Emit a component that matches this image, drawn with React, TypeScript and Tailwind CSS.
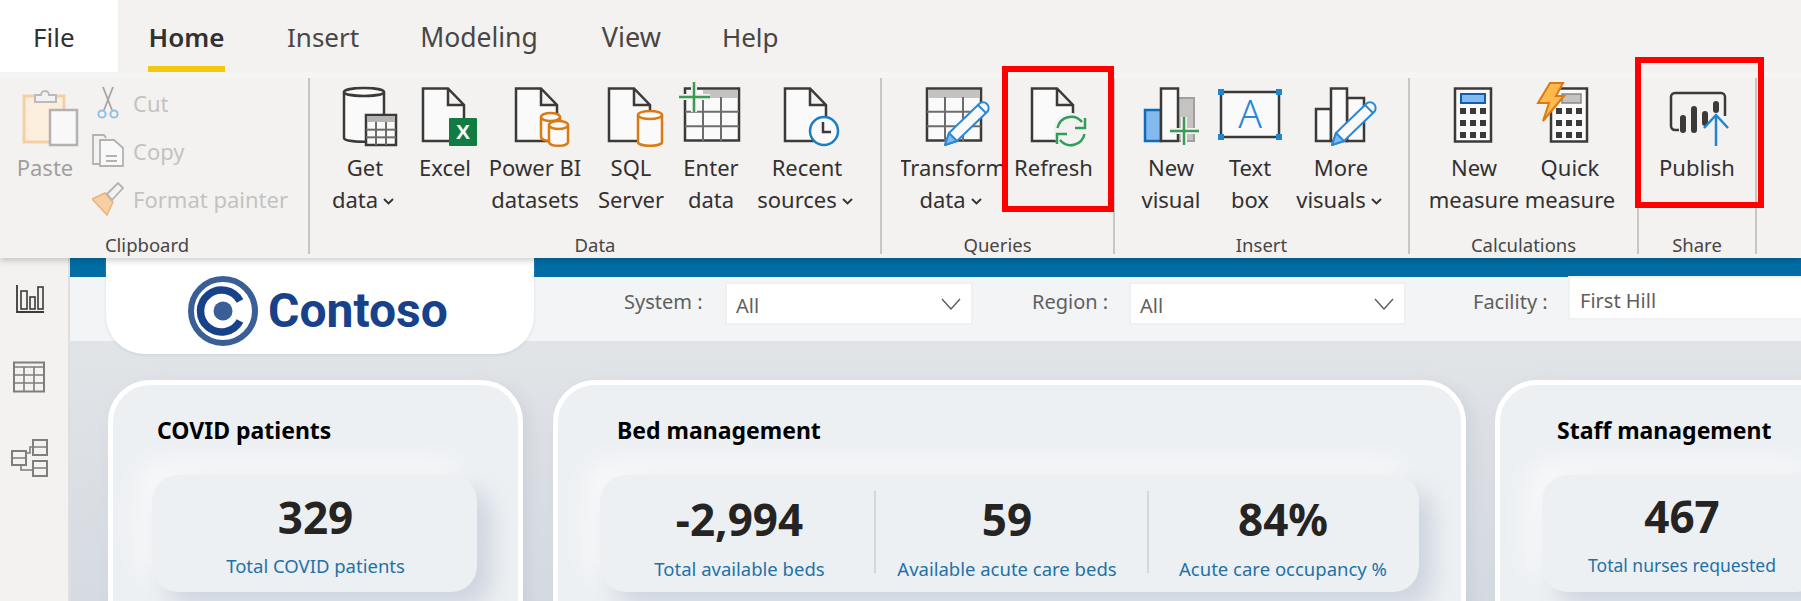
import React from "react";

const INK = "#3b3a39";

function Doc({ x = 8 }: { x?: number }) {
  return (
    <path
      d={`M${x} 2.5H${x + 25}L${x + 41} 19V55H${x}ZM${x + 25} 2.5V19H${x + 41}`}
      fill="#fafafa"
      stroke={INK}
      strokeWidth="2.5"
    />
  );
}

function Cyl({ x, y, w, h, stroke = "#d97a13" }: { x: number; y: number; w: number; h: number; stroke?: string }) {
  return (
    <g fill="#fafafa" stroke={stroke} strokeWidth="2.5">
      <path d={`M${x} ${y + 4}V${y + h - 4}C${x} ${y + h + 1} ${x + w} ${y + h + 1} ${x + w} ${y + h - 4}V${y + 4}`} />
      <ellipse cx={x + w / 2} cy={y + 4} rx={w / 2} ry={4} />
    </g>
  );
}

function Pencil() {
  return (
    <g stroke="#2b88d8" strokeWidth="2" strokeLinejoin="round">
      <path d="M22 59L26 47L56 18a5.6 5.6 0 0 1 8 8L34 55Z" fill="#fafafa" />
      <path d="M22 59L26 47L34 55Z" fill="#83b9ec" />
      <path d="M55 19L63 27" fill="none" />
    </g>
  );
}

function Grid({ x, y, w, h, cols, rows, stroke = "#6e6d6b" }: { x: number; y: number; w: number; h: number; cols: number; rows: number; stroke?: string }) {
  const lines: React.ReactNode[] = [];
  for (let i = 1; i < cols; i++) {
    const lx = x + (w * i) / cols;
    lines.push(<path key={"c" + i} d={`M${lx} ${y}V${y + h}`} />);
  }
  for (let i = 1; i < rows; i++) {
    const ly = y + (h * i) / rows;
    lines.push(<path key={"r" + i} d={`M${x} ${ly}H${x + w}`} />);
  }
  return <g stroke={stroke} strokeWidth="2" fill="none">{lines}</g>;
}

function Svg({ children }: { children: React.ReactNode }) {
  return (
    <svg width="60" height="60" viewBox="0 0 60 60" className="shrink-0 overflow-visible">
      {children}
    </svg>
  );
}

const GetData = () => (
  <Svg>
    <Cyl x={9} y={2} w={40} h={54} stroke={INK} />
    <rect x="31" y="29" width="30" height="30" fill="#fafafa" stroke={INK} strokeWidth="2.5" />
    <rect x="32" y="30" width="28" height="6" fill="#b5b4b2" />
    <Grid x={31} y={36} w={30} h={23} cols={3} rows={3} />
  </Svg>
);
const Excel = () => (
  <Svg>
    <Doc />
    <rect x="34" y="32" width="28" height="28" rx="1" fill="#107c41" />
    <text x="48" y="53" textAnchor="middle" fontSize="21" fontWeight="700" fill="#fff" fontFamily="Liberation Sans, sans-serif">X</text>
  </Svg>
);
const PowerBi = () => (
  <Svg>
    <Doc x={11} />
    <Cyl x={36} y={27} w={19} h={28} />
    <Cyl x={44} y={35} w={19} h={25} />
  </Svg>
);
const Sql = () => (
  <Svg>
    <Doc />
    <Cyl x={37} y={25} w={24} h={35} />
  </Svg>
);
const EnterData = () => (
  <Svg>
    <rect x="4" y="2.5" width="54" height="52" fill="#fafafa" stroke={INK} strokeWidth="2.5" />
    <rect x="22" y="4" width="35" height="8" fill="#c4c3c1" />
    <Grid x={4} y={11} w={54} h={44} cols={3} rows={3} />
    <path d="M13 -4V26M-2 11H29" stroke="#f3f2f1" strokeWidth="6" />
    <path d="M13 -4V26M-2 11H29" stroke="#3c9a55" strokeWidth="2.5" />
  </Svg>
);
const Recent = () => (
  <Svg>
    <Doc />
    <circle cx="47" cy="45" r="14" fill="#fafafa" stroke="#1e7fc0" strokeWidth="2.5" />
    <path d="M46 36V46H54" fill="none" stroke={INK} strokeWidth="2.5" />
  </Svg>
);
const Transform = () => (
  <Svg>
    <rect x="4" y="2.5" width="54" height="52" fill="#fafafa" stroke={INK} strokeWidth="2.5" />
    <rect x="5" y="4" width="52" height="8" fill="#c4c3c1" />
    <Grid x={4} y={11} w={54} h={44} cols={3} rows={3} />
    <Pencil />
  </Svg>
);
const Refresh = () => (
  <Svg>
    <Doc />
    <circle cx="47" cy="45" r="18" fill="#f3f2f1" />
    <g fill="none" stroke="#2f9e57" strokeWidth="2.5">
      <path d="M33.5 42A14 14 0 0 1 58 36" />
      <path d="M61 32V42H51" />
      <path d="M60.5 48A14 14 0 0 1 36 54" />
      <path d="M33 58V48H43" />
    </g>
  </Svg>
);
const NewVisual = () => (
  <Svg>
    <rect x="36" y="12" width="17" height="43" fill="#c4c3c1" stroke="#a19f9d" strokeWidth="2" />
    <rect x="4" y="24" width="16" height="31" fill="#83b9ec" stroke="#0f6cbd" strokeWidth="2.5" />
    <rect x="20" y="2.5" width="17" height="52.5" fill="#fafafa" stroke={INK} strokeWidth="2.5" />
    <path d="M43 31V59M29 45H58" stroke="#f3f2f1" strokeWidth="6" />
    <path d="M43 31V59M29 45H58" stroke="#3c9a55" strokeWidth="2.5" />
  </Svg>
);
const TextBox = () => (
  <Svg>
    <rect x="1" y="6" width="58" height="45" fill="#fafafa" stroke={INK} strokeWidth="2.5" />
    <g fill="#1c86d1">
      <rect x="-2" y="3" width="6" height="6" />
      <rect x="56" y="3" width="6" height="6" />
      <rect x="-2" y="48" width="6" height="6" />
      <rect x="56" y="48" width="6" height="6" />
    </g>
    <text x="30" y="42" textAnchor="middle" fontSize="39" fill="#2b88d8" fontFamily="Noto Sans, sans-serif" fontWeight="300">A</text>
  </Svg>
);
const MoreVisuals = () => (
  <Svg>
    <rect x="36" y="12" width="17" height="43" fill="#fafafa" stroke={INK} strokeWidth="2.5" />
    <rect x="5" y="23" width="15" height="32" fill="#fafafa" stroke={INK} strokeWidth="2.5" />
    <rect x="20" y="2.5" width="16" height="52.5" fill="#fafafa" stroke={INK} strokeWidth="2.5" />
    <g transform="translate(-1 0)"><Pencil /></g>
  </Svg>
);

function Keys({ x, y }: { x: number; y: number }) {
  const k: React.ReactNode[] = [];
  for (let r = 0; r < 3; r++)
    for (let c = 0; c < 3; c++)
      k.push(<rect key={r + "-" + c} x={x + c * 10} y={y + r * 12} width="6" height="6" fill={INK} />);
  return <g>{k}</g>;
}
const NewMeasure = () => (
  <Svg>
    <rect x="11" y="2.5" width="36" height="53" fill="#fafafa" stroke={INK} strokeWidth="2.5" />
    <rect x="17" y="8" width="24" height="9" fill="#83b9ec" stroke="#0f5fb0" strokeWidth="2" />
    <Keys x={16} y={22} />
  </Svg>
);
const QuickMeasure = () => (
  <Svg>
    <rect x="11" y="2.5" width="36" height="53" fill="#fafafa" stroke={INK} strokeWidth="2.5" />
    <rect x="22" y="8" width="19" height="9" fill="#c4c3c1" stroke="#8a8886" strokeWidth="1.5" />
    <Keys x={16} y={22} />
    <path d="M10 -3H23L16 10H24L3 35L9 17H-2Z" fill="#fdb94e" stroke="#d97a13" strokeWidth="2" />
  </Svg>
);
const Publish = () => (
  <Svg>
    <path d="M12 44H8a4 4 0 0 1-4-4V11a4 4 0 0 1 4-4H54a4 4 0 0 1 4 4V30" fill="none" stroke={INK} strokeWidth="2.5" />
    <rect x="13" y="29" width="6" height="18" rx="3" fill={INK} />
    <rect x="24" y="20" width="6" height="27" rx="3" fill={INK} />
    <rect x="35" y="25" width="6" height="15" rx="3" fill={INK} />
    <rect x="46" y="15" width="6" height="12" rx="3" fill={INK} />
    <path d="M49 60V30M37 42L49 29L61 42" fill="none" stroke="#1f86cf" strokeWidth="2.5" />
  </Svg>
);

function Chevron() {
  return (
    <svg width="11" height="7" viewBox="0 0 11 7" className="ml-[5px] mr-[4px] mt-[5px] shrink-0">
      <path d="M1 1L5.5 5.5L10 1" fill="none" stroke="#323130" strokeWidth="1.8" />
    </svg>
  );
}

function RibbonButton({ w, icon, lines, chevron = false }: { w: string; icon: React.ReactNode; lines: string[]; chevron?: boolean }) {
  return (
    <div className={`${w} shrink-0 flex flex-col items-center overflow-hidden pt-[8px]`}>
      {icon}
      <div className="mt-[5px] w-full flex flex-col items-center text-[22px] leading-[32px] text-[#323130] whitespace-nowrap">
        {lines.map((l, i) => (
          <div key={l} className="flex items-center">
            <span>{l}</span>
            {chevron && i === lines.length - 1 ? <Chevron /> : null}
          </div>
        ))}
      </div>
    </div>
  );
}

function Group({ w, pl, label, labelPad = "", children }: { w: string; pl: string; label: string; labelPad?: string; children: React.ReactNode }) {
  return (
    <div className={`${w} h-[176px] shrink-0 flex flex-col border-r-2 border-[#c8c6c4]`}>
      <div className={`flex flex-1 min-h-0 ${pl}`}>{children}</div>
      <div className={`h-[18px] leading-[18px] text-center text-[18.5px] text-[#484644] ${labelPad}`}>{label}</div>
    </div>
  );
}

function Clipboard() {
  return (
    <div className="flex">
      <div className="w-[66px] ml-[12px] flex flex-col items-center pt-[8px]">
        <svg width="60" height="60" viewBox="0 0 60 60" className="overflow-visible">
          <path d="M9 10H49V56H9Z" fill="#fbeedd" stroke="#f4cfa3" strokeWidth="3" />
          <path d="M20 16V9H26a4 4 0 0 1 8 0H41V16Z" fill="#f3f2f1" stroke="#bdbbb9" strokeWidth="2" />
          <rect x="35" y="24" width="27" height="35" fill="#f8f8f8" stroke="#b4b2b0" strokeWidth="2.5" />
        </svg>
        <span className="mt-[5px] text-[22px] leading-[32px] text-[#a19f9d]">Paste</span>
      </div>
      <div className="ml-[14px] pt-[1px] flex flex-col text-[22px] text-[#c4c2c0] whitespace-nowrap">
        <div className="h-[48px] flex items-center">
          <svg width="32" height="34" viewBox="0 0 32 34" className="mr-[9px] shrink-0">
            <path d="M11 1L20 24M21 1L12 24" fill="none" stroke="#a8a6a4" strokeWidth="1.8" />
            <circle cx="10" cy="28" r="3.6" fill="none" stroke="#8fc1e3" strokeWidth="2" />
            <circle cx="22" cy="28" r="3.6" fill="none" stroke="#8fc1e3" strokeWidth="2" />
          </svg>
          Cut
        </div>
        <div className="h-[48px] flex items-center">
          <svg width="32" height="34" viewBox="0 0 32 34" className="mr-[9px] shrink-0">
            <path d="M8 30H1V1H12L14 4" fill="none" stroke="#b4b2b0" strokeWidth="1.8" />
            <path d="M8 6H22L31 14V32H8Z" fill="#f8f8f8" stroke="#b4b2b0" strokeWidth="1.8" />
            <path d="M14 22H25M14 27H25" stroke="#b4b2b0" strokeWidth="1.8" />
          </svg>
          Copy
        </div>
        <div className="h-[48px] flex items-center">
          <svg width="32" height="34" viewBox="0 0 32 34" className="mr-[9px] shrink-0">
            <path d="M0 17L13 11L21 20L15 33Z" fill="#f6cfa5" stroke="#eeb077" strokeWidth="1.5" />
            <path d="M15 12L26 1L31 6L20 18Z" fill="#f3f2f1" stroke="#b4b2b0" strokeWidth="1.8" />
          </svg>
          Format painter
        </div>
      </div>
    </div>
  );
}

function Ribbon() {
  return (
    <div className="relative z-20 h-[258px] bg-[#f3f2f1] shadow-[0_3px_6px_rgba(0,0,0,0.18)] shrink-0">
      <div className="h-[72px] flex items-stretch text-[26px] text-[#484644]">
        <div className="w-[118px] bg-white flex items-center pl-[33px] text-[#323130] pt-[2px]">File</div>
        <div className="ml-[30px] w-[77px] border-b-[6px] border-[#f2c811] flex items-center justify-center font-semibold text-[#323130] pt-[8px]">Home</div>
        <div className="ml-[62px] flex items-center pt-[2px]">Insert</div>
        <div className="ml-[61px] flex items-center pt-[4px] text-[26.5px]">Modeling</div>
        <div className="ml-[64px] flex items-center pt-[2px] text-[27px]">View</div>
        <div className="ml-[61px] flex items-center pt-[2px]">Help</div>
      </div>
      <div className="h-[186px] border-t-[6px] border-[#f5f5f4] flex">
        <Group w="w-[310px]" pl="" label="Clipboard" labelPad="pr-[14px]"><Clipboard /></Group>
        <Group w="w-[572px]" pl="pl-[15px]" label="Data">
          <RibbonButton w="w-[80px]" icon={<GetData />} lines={["Get", "data"]} chevron />
          <RibbonButton w="w-[80px]" icon={<Excel />} lines={["Excel"]} />
          <RibbonButton w="w-[100px]" icon={<PowerBi />} lines={["Power BI", "datasets"]} />
          <RibbonButton w="w-[92px]" icon={<Sql />} lines={["SQL", "Server"]} />
          <RibbonButton w="w-[68px]" icon={<EnterData />} lines={["Enter", "data"]} />
          <RibbonButton w="w-[124px]" icon={<Recent />} lines={["Recent", "sources"]} chevron />
        </Group>
        <Group w="w-[233px]" pl="pl-[19px]" label="Queries">
          <RibbonButton w="w-[103px]" icon={<Transform />} lines={["Transform", "data"]} chevron />
          <RibbonButton w="w-[99px]" icon={<Refresh />} lines={["Refresh"]} />
        </Group>
        <Group w="w-[295px]" pl="pl-[14px]" label="Insert">
          <RibbonButton w="w-[84px]" icon={<NewVisual />} lines={["New", "visual"]} />
          <RibbonButton w="w-[74px]" icon={<TextBox />} lines={["Text", "box"]} />
          <RibbonButton w="w-[108px]" icon={<MoreVisuals />} lines={["More", "visuals"]} chevron />
        </Group>
        <Group w="w-[229px]" pl="pl-[17px]" label="Calculations">
          <RibbonButton w="w-[94px]" icon={<NewMeasure />} lines={["New", "measure"]} />
          <RibbonButton w="w-[98px]" icon={<QuickMeasure />} lines={["Quick", "measure"]} />
        </Group>
        <Group w="w-[118px]" pl="" label="Share">
          <RibbonButton w="w-[116px]" icon={<Publish />} lines={["Publish"]} />
        </Group>
      </div>
    </div>
  );
}

function Sidebar() {
  return (
    <div className="w-[70px] shrink-0 bg-[#f3f2f1] border-r-2 border-[#e1dfdd] flex flex-col pt-[26px]">
      <svg width="30" height="30" viewBox="0 0 30 30" className="ml-[15px]">
        <path d="M2 1V28H29" fill="none" stroke={INK} strokeWidth="1.8" />
        <rect x="6" y="7" width="6" height="18" fill="none" stroke={INK} strokeWidth="1.6" />
        <rect x="15" y="13" width="5" height="12" fill="none" stroke={INK} strokeWidth="1.6" />
        <rect x="23" y="3" width="5" height="22" fill="none" stroke={INK} strokeWidth="1.6" />
      </svg>
      <svg width="34" height="32" viewBox="0 0 34 32" className="mt-[47px] ml-[12px]">
        <rect x="2" y="1.5" width="30" height="29" fill="none" stroke="#807e7c" strokeWidth="2" />
        <path d="M2 6H32M2 14H32M2 22H32M12 6V30M22 6V30" stroke="#807e7c" strokeWidth="1.6" fill="none" />
      </svg>
      <svg width="38" height="38" viewBox="0 0 38 38" className="mt-[46px] ml-[11px]">
        <rect x="1" y="12" width="14" height="14" fill="none" stroke="#807e7c" strokeWidth="2" />
        <rect x="22" y="1" width="14" height="15" fill="none" stroke="#807e7c" strokeWidth="2" />
        <rect x="22" y="22" width="14" height="15" fill="none" stroke="#807e7c" strokeWidth="2" />
        <path d="M1 19H15M22 8H36M22 29H36M15 14H19V8H22M10 26V31H22" fill="none" stroke="#807e7c" strokeWidth="1.6" />
      </svg>
    </div>
  );
}

function Logo() {
  return (
    <div className="relative z-10 shrink-0 w-[428px] h-[96px] -mt-[19px] ml-[36px] bg-white rounded-b-[38px] flex items-center pl-[81px] shadow-[0_1px_3px_rgba(170,180,195,0.35)]">
      <svg width="72" height="72" viewBox="0 0 72 72" className="shrink-0 mt-[10px]">
        <circle cx="36" cy="36" r="32" fill="none" stroke="#3a5f97" strokeWidth="6" />
        <path d="M53 26A21 21 0 1 0 53 46" fill="none" stroke="#17428a" strokeWidth="7.5" />
        <circle cx="36" cy="36" r="9.5" fill="#3a5f97" />
      </svg>
      <span className="ml-[9px] mt-[10px] font-['Roboto',sans-serif] font-bold text-[48px] leading-[52px] text-[#17428a]">Contoso</span>
    </div>
  );
}

function Select({ w }: { w: string }) {
  return (
    <div className={`${w} shrink-0 mt-[5px] h-[43px] bg-white border-2 border-[#eef0f2] flex items-center pl-[9px] pr-[10px] pt-[5px] text-[20px] text-[#605e5c]`}>
      <span>All</span>
      <svg width="20" height="12" viewBox="0 0 20 12" className="ml-auto -mt-[5px]">
        <path d="M1 1L10 11L19 1" fill="none" stroke="#605e5c" strokeWidth="1.4" />
      </svg>
    </div>
  );
}

function Header() {
  return (
    <div className="h-[64px] shrink-0 bg-[#f3f4f6] flex items-start text-[20px] text-[#605e5c]">
      <Logo />
      <div className="ml-[90px] w-[101px] shrink-0 h-[49px] flex items-center">System :</div>
      <Select w="w-[248px]" />
      <div className="ml-[59px] w-[97px] shrink-0 h-[49px] flex items-center">Region :</div>
      <Select w="w-[277px]" />
      <div className="ml-[67px] w-[95px] shrink-0 h-[49px] flex items-center">Facility :</div>
      <div className="relative z-10 -mt-px w-[260px] shrink-0 h-[44px] bg-white border-2 border-[#eef0f2] flex items-center pl-[10px] pt-[5px]">First Hill</div>
    </div>
  );
}

function Kpi({ value, label, pt, gap, labelSize = "text-[18.5px]" }: { value: string; label: string; pt: string; gap: string; labelSize?: string }) {
  return (
    <div className={`flex flex-col items-center ${pt}`}>
      <div className="h-[48px] leading-[48px] text-[44px] font-bold text-[#252423]">{value}</div>
      <div className={`${gap} h-[28px] leading-[28px] ${labelSize} text-[#1f72a6] whitespace-nowrap`}>{label}</div>
    </div>
  );
}

const cardCls = "h-[260px] shrink-0 bg-[#edf0f3] border-[5px] border-white rounded-[42px] shadow-[6px_6px_16px_rgba(190,198,210,0.55)]";
const titleCls = "mt-[29px] h-[32px] leading-[32px] text-[23px] font-bold text-black";
const kpiCls = "mt-[29px] h-[117px] bg-[#edf0f3] rounded-[26px] shadow-[14px_14px_24px_#cdd4df,-14px_-14px_24px_#f7f8f9]";

function Main() {
  return (
    <div className="flex-1 min-h-0 bg-gradient-to-b from-[#e1e4e7] to-[#d6dbe2] flex pl-[38px] pt-[39px] overflow-hidden">
      <div className={`${cardCls} w-[415px]`}>
        <div className={`${titleCls} pl-[44px]`}>COVID patients</div>
        <div className={`${kpiCls} ml-[39px] w-[325px] pl-[2px]`}>
          <Kpi value="329" label="Total COVID patients" pt="pt-[18px]" gap="mt-[11px]" />
        </div>
      </div>
      <div className={`${cardCls} ml-[30px] w-[913px]`}>
        <div className={`${titleCls} pl-[59px]`}>Bed management</div>
        <div className={`${kpiCls} ml-[42px] w-[819px] flex`}>
          <div className="w-[274px] shrink-0 pl-[5px]">
            <Kpi value="-2,994" label="Total available beds" pt="pt-[20px]" gap="mt-[12px]" />
          </div>
          <div className="w-[2px] h-[82px] mt-[16px] shrink-0 bg-[#d3d8dc]" />
          <div className="w-[271px] shrink-0 pr-[9px]">
            <Kpi value="59" label="Available acute care beds" pt="pt-[20px]" gap="mt-[12px]" />
          </div>
          <div className="w-[2px] h-[82px] mt-[16px] shrink-0 bg-[#d3d8dc]" />
          <div className="flex-1 pr-[2px]">
            <Kpi value="84%" label="Acute care occupancy %" pt="pt-[20px]" gap="mt-[12px]" />
          </div>
        </div>
      </div>
      <div className={`${cardCls} ml-[29px] w-[420px]`}>
        <div className={`${titleCls} pl-[57px]`}>Staff management</div>
        <div className={`${kpiCls} ml-[42px] w-[280px]`}>
          <Kpi value="467" label="Total nurses requested" pt="pt-[17px]" gap="mt-[11px]" labelSize="text-[17.5px]" />
        </div>
      </div>
    </div>
  );
}

export default function App() {
  return (
    <div className="relative w-[1801px] h-[601px] overflow-hidden bg-[#f3f2f1] flex flex-col font-['Noto_Sans','Liberation_Sans',sans-serif]">
      <Ribbon />
      <div className="flex flex-1 min-h-0">
        <Sidebar />
        <div className="flex-1 min-w-0 flex flex-col">
          <div className="h-[19px] shrink-0 bg-[#016da5]" />
          <Header />
          <Main />
        </div>
      </div>
      <div className="absolute z-30 left-[1002px] top-[66px] w-[112px] h-[146px] border-[6px] border-[#ff0000]" />
      <div className="absolute z-30 left-[1635px] top-[57px] w-[129px] h-[151px] border-[6px] border-[#ff0000]" />
    </div>
  );
}
